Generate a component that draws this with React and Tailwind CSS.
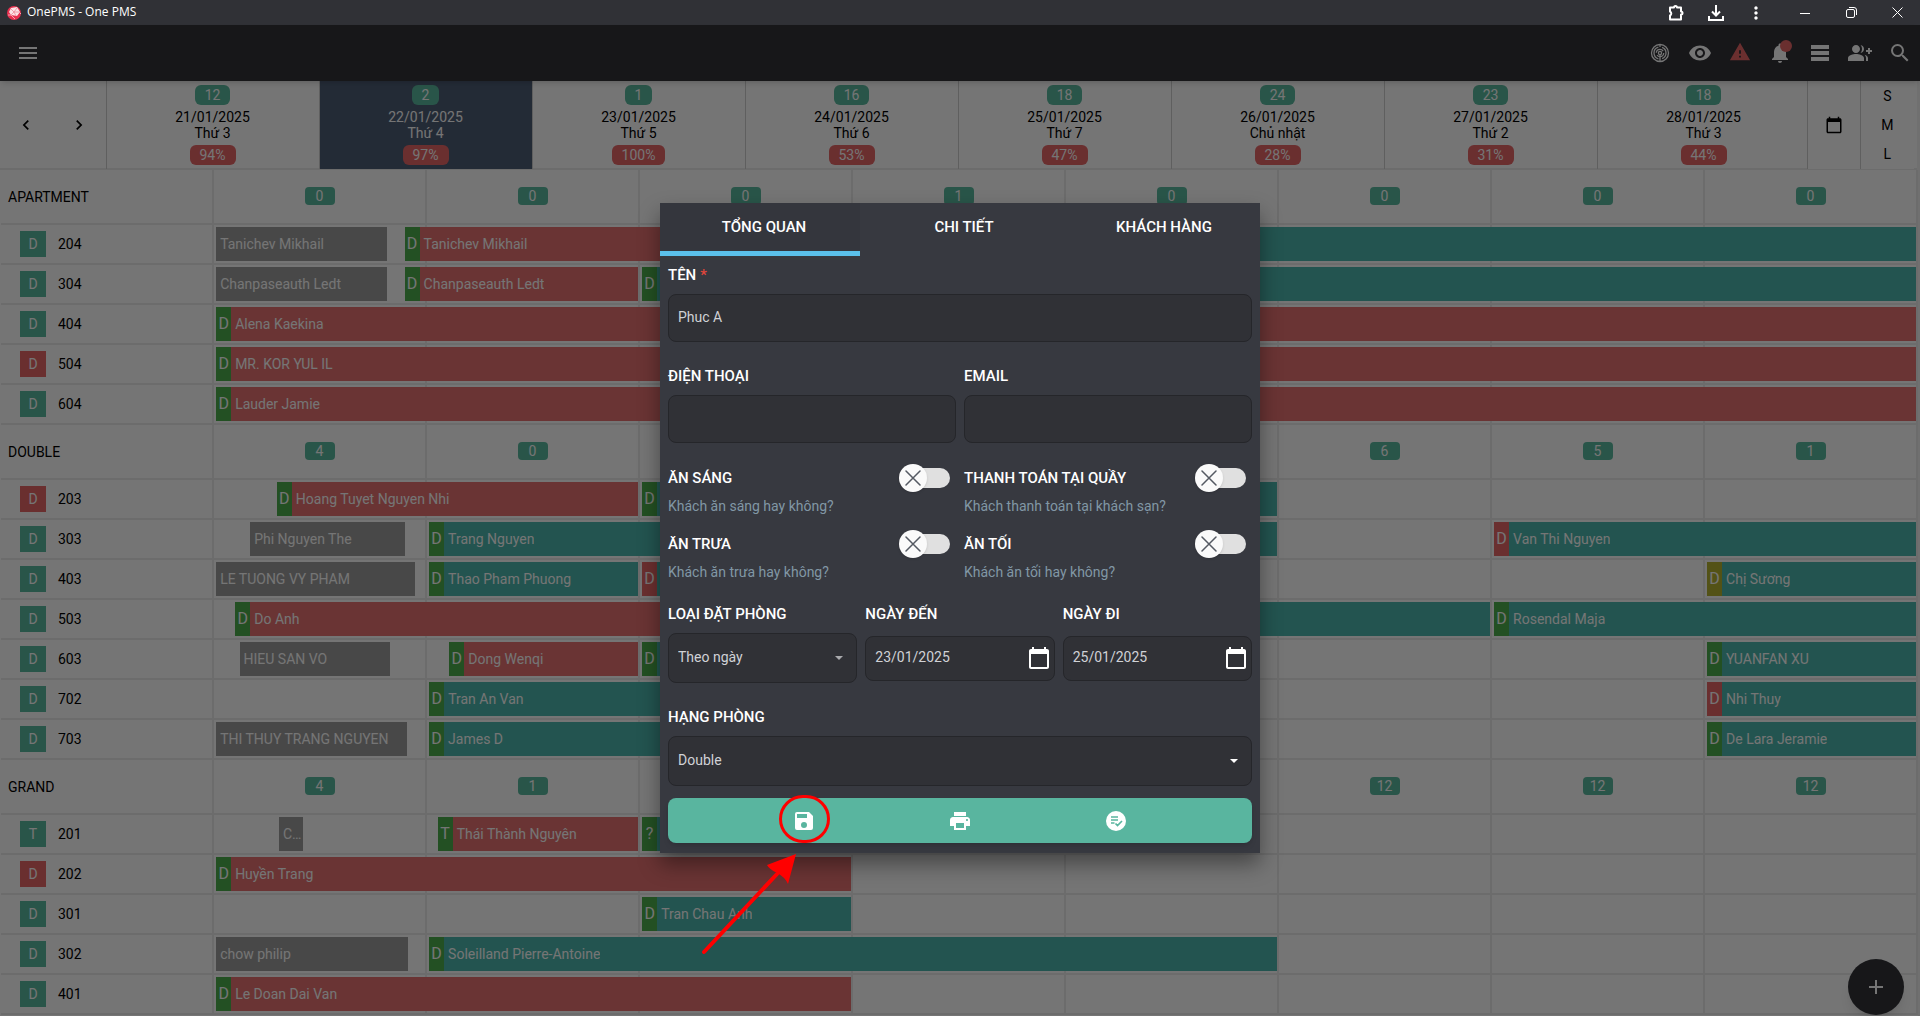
import { Fragment } from 'react';
import {
  MdAdd,
  MdCalendarToday,
  MdChevronLeft,
  MdChevronRight,
  MdGroupAdd,
  MdMenu,
  MdMoreVert,
  MdNotifications,
  MdPrint,
  MdSearch,
  MdVisibility,
  MdWarning,
} from 'react-icons/md';

const days = [
  { free: 12, date: '21/01/2025', name: 'Thứ 3', rate: '94%' },
  { free: 2, date: '22/01/2025', name: 'Thứ 4', rate: '97%', today: true },
  { free: 1, date: '23/01/2025', name: 'Thứ 5', rate: '100%' },
  { free: 16, date: '24/01/2025', name: 'Thứ 6', rate: '53%' },
  { free: 18, date: '25/01/2025', name: 'Thứ 7', rate: '47%' },
  { free: 24, date: '26/01/2025', name: 'Chủ nhật', rate: '28%' },
  { free: 23, date: '27/01/2025', name: 'Thứ 2', rate: '31%' },
  { free: 18, date: '28/01/2025', name: 'Thứ 3', rate: '44%' },
];

// from / to are counted in days from the left edge of the timeline
const groups = [
  {
    name: 'APARTMENT',
    counts: [0, 0, 0, 1, 0, 0, 0, 0],
    rooms: [
      {
        no: '204',
        bars: [
          { from: 0.01, to: 0.81, state: 'out', guest: 'Tanichev Mikhail' },
          { from: 0.895, to: 2.99, state: 'in', tag: 'D', guest: 'Tanichev Mikhail' },
          { from: 3.01, to: 7.99, state: 'booked', tag: 'D' },
        ],
      },
      {
        no: '304',
        bars: [
          { from: 0.01, to: 0.81, state: 'out', guest: 'Chanpaseauth Ledt' },
          { from: 0.895, to: 1.99, state: 'in', tag: 'D', guest: 'Chanpaseauth Ledt' },
          { from: 2.01, to: 7.99, state: 'booked', tag: 'D' },
        ],
      },
      { no: '404', bars: [{ from: 0.01, to: 7.99, state: 'in', tag: 'D', guest: 'Alena Kaekina' }] },
      { no: '504', dirty: true, bars: [{ from: 0.01, to: 7.99, state: 'in', tag: 'D', guest: 'MR. KOR YUL IL' }] },
      { no: '604', bars: [{ from: 0.01, to: 7.99, state: 'in', tag: 'D', guest: 'Lauder Jamie' }] },
    ],
  },
  {
    name: 'DOUBLE',
    counts: [4, 0, 0, 3, 5, 6, 5, 1],
    rooms: [
      {
        no: '203',
        dirty: true,
        bars: [
          { from: 0.295, to: 1.99, state: 'in', tag: 'D', guest: 'Hoang Tuyet Nguyen Nhi' },
          { from: 2.01, to: 4.99, state: 'booked', tag: 'D' },
        ],
      },
      {
        no: '303',
        bars: [
          { from: 0.17, to: 0.895, state: 'out', guest: 'Phi Nguyen The' },
          { from: 1.01, to: 4.99, state: 'booked', tag: 'D', guest: 'Trang Nguyen' },
          { from: 6.01, to: 7.99, state: 'booked', tag: 'D', tagColor: 'red', guest: 'Van Thi Nguyen' },
        ],
      },
      {
        no: '403',
        bars: [
          { from: 0.01, to: 0.945, state: 'out', guest: 'LE TUONG VY PHAM' },
          { from: 1.01, to: 1.99, state: 'booked', tag: 'D', guest: 'Thao Pham Phuong' },
          { from: 2.01, to: 3.99, state: 'booked', tag: 'D', tagColor: 'red' },
          { from: 7.01, to: 7.99, state: 'booked', tag: 'D', tagColor: 'yellow', guest: 'Chị Sương' },
        ],
      },
      {
        no: '503',
        bars: [
          { from: 0.1, to: 3.99, state: 'in', tag: 'D', guest: 'Do Anh' },
          { from: 4.01, to: 5.99, state: 'booked', tag: 'D' },
          { from: 6.01, to: 7.99, state: 'booked', tag: 'D', guest: 'Rosendal Maja' },
        ],
      },
      {
        no: '603',
        bars: [
          { from: 0.12, to: 0.825, state: 'out', guest: 'HIEU SAN VO' },
          { from: 1.105, to: 1.99, state: 'in', tag: 'D', guest: 'Dong Wenqi' },
          { from: 2.01, to: 3.99, state: 'booked', tag: 'D' },
          { from: 7.01, to: 7.99, state: 'booked', tag: 'D', guest: 'YUANFAN XU' },
        ],
      },
      {
        no: '702',
        bars: [
          { from: 1.01, to: 3.99, state: 'booked', tag: 'D', guest: 'Tran An Van' },
          { from: 7.01, to: 7.99, state: 'booked', tag: 'D', tagColor: 'red', guest: 'Nhi Thuy' },
        ],
      },
      {
        no: '703',
        bars: [
          { from: 0.01, to: 0.905, state: 'out', guest: 'THI THUY TRANG NGUYEN' },
          { from: 1.01, to: 3.99, state: 'booked', tag: 'D', guest: 'James D' },
          { from: 7.01, to: 7.99, state: 'booked', tag: 'D', guest: 'De Lara Jeramie' },
        ],
      },
    ],
  },
  {
    name: 'GRAND',
    counts: [4, 1, 2, 9, 10, 12, 12, 12],
    rooms: [
      {
        no: '201',
        tag: 'T',
        bars: [
          { from: 0.305, to: 0.42, state: 'out', guest: 'C…' },
          { from: 1.05, to: 1.99, state: 'in', tag: 'T', guest: 'Thái Thành Nguyên' },
          { from: 2.01, to: 2.99, state: 'booked', tag: '?' },
        ],
      },
      { no: '202', dirty: true, bars: [{ from: 0.01, to: 2.99, state: 'in', tag: 'D', guest: 'Huyền Trang' }] },
      { no: '301', bars: [{ from: 2.01, to: 2.99, state: 'booked', tag: 'D', guest: 'Tran Chau Anh' }] },
      {
        no: '302',
        bars: [
          { from: 0.01, to: 0.91, state: 'out', guest: 'chow philip' },
          { from: 1.01, to: 4.99, state: 'booked', tag: 'D', guest: 'Soleilland Pierre-Antoine' },
        ],
      },
      { no: '401', bars: [{ from: 0.01, to: 2.99, state: 'in', tag: 'D', guest: 'Le Doan Dai Van' }] },
    ],
  },
];

const barColors = { out: 'bg-[#9d9d9d]', in: 'bg-[#e67272]', booked: 'bg-[#4db7ae]' };
const tagColors = { green: 'bg-[#4eae4e]', red: 'bg-[#e86668]', yellow: 'bg-[#b6b431]' };

function TitleBar() {
  return (
    <div className="flex h-[25px] shrink-0 items-center bg-[#303136] text-white">
      <svg viewBox="0 0 16 16" className="ml-1.5 size-4">
        <circle cx="8" cy="8" r="7" fill="#e8304f" />
        <path d="M5 3l6-1 3 5-3 4-6-1-2-3z" fill="#fbe3e6" />
        <path d="M5 4l3 3 5 0M8 7l-3 3M8 7l2 4M8 7l3-4" stroke="#f08a9a" strokeWidth="0.8" fill="none" />
        <path d="M2 10l3 0 4 4M13 7l2 2" stroke="#f7a3b0" strokeWidth="1" fill="none" />
      </svg>
      <span className="ml-[5px] pb-0.5 font-['Open_Sans',sans-serif] text-xs">OnePMS - One PMS</span>
      <div className="ml-auto flex items-center">
        <button aria-label="Extensions" className="flex w-10 justify-center">
          <svg viewBox="0 0 18 18" className="size-[18px]" fill="none" stroke="currentColor" strokeWidth="2">
            <path d="M3 3.500h4a1.500 1.500 0 0 1 3 0h4v4a1.500 1.500 0 0 1 0 3v5H3v-4a2.200 2.200 0 0 0 0-4z" strokeLinejoin="round" />
          </svg>
        </button>
        <button aria-label="Downloads" className="flex w-10 justify-center">
          <svg viewBox="0 0 18 18" className="size-[18px]" fill="none" stroke="currentColor" strokeWidth="2">
            <path d="M9 1v10M5 7.500l4 4 4-4M2 12v4h14v-4" />
          </svg>
        </button>
        <button aria-label="More" className="flex w-10 justify-center">
          <MdMoreVert className="size-5" />
        </button>
        <button aria-label="Minimize" className="ml-1.5 flex w-[46px] justify-center">
          <svg viewBox="0 0 10 10" className="size-2.5" stroke="currentColor">
            <path d="M0 5.500h10" />
          </svg>
        </button>
        <button aria-label="Restore" className="flex w-[46px] justify-center">
          <svg viewBox="0 0 11 11" className="size-[11px]" fill="none" stroke="currentColor">
            <rect x="0.500" y="2.500" width="8" height="8" rx="1.500" />
            <path d="M3 0.500h5a2.500 2.500 0 0 1 2.500 2.500v5" />
          </svg>
        </button>
        <button aria-label="Close" className="flex w-[46px] justify-center">
          <svg viewBox="0 0 11 11" className="size-[11px]" stroke="currentColor">
            <path d="M0.500 0.500l10 10M10.500 0.500l-10 10" />
          </svg>
        </button>
      </div>
    </div>
  );
}

function AppBar() {
  return (
    <header className="relative z-10 flex h-14 shrink-0 items-center bg-[#323338] pl-4 text-white shadow-md">
      <button aria-label="Menu">
        <MdMenu className="size-6" />
      </button>
      <div className="ml-auto flex">
        <button aria-label="Radar" className="flex w-10 justify-center">
          <svg viewBox="0 0 24 24" className="size-6" fill="none" stroke="currentColor" strokeWidth="1.300">
            <circle cx="12" cy="12" r="8.500" />
            <circle cx="12" cy="12" r="6" strokeDasharray="15 3.850" strokeDashoffset="8" />
            <circle cx="12" cy="12" r="3.700" strokeDasharray="9 2.600" />
            <circle cx="12" cy="12" r="1.600" />
            <path d="M12 13v8M12 3v3" />
          </svg>
        </button>
        <button aria-label="View" className="flex w-10 justify-center">
          <MdVisibility className="size-6" />
        </button>
        <button aria-label="Warnings" className="flex w-10 justify-center text-[#e86668]">
          <MdWarning className="size-[22px]" />
        </button>
        <button aria-label="Notifications" className="relative flex w-10 justify-center">
          <MdNotifications className="size-6" />
          <span className="absolute -top-px right-2 size-3 rounded-full bg-[#e86668]" />
        </button>
        <button aria-label="List" className="flex w-10 justify-center">
          <svg viewBox="0 0 24 24" className="size-6" fill="currentColor">
            <path d="M3 4h18v4H3zM3 10h18v4H3zM3 16h18v4H3z" />
          </svg>
        </button>
        <button aria-label="Add guests" className="flex w-10 justify-center">
          <MdGroupAdd className="size-6" />
        </button>
        <button aria-label="Search" className="flex w-10 justify-center">
          <MdSearch className="size-6" />
        </button>
      </div>
    </header>
  );
}

function DayHeader() {
  return (
    <div className="mr-[3px] grid h-[89px] shrink-0 grid-cols-[1fr_repeat(8,2fr)_1fr] border-b-2 border-[#ececec] bg-white">
      <div className="grid grid-cols-2 border-r border-[#d0d0d0]">
        <button aria-label="Previous day" className="flex items-center justify-center">
          <MdChevronLeft className="size-5" />
        </button>
        <button aria-label="Next day" className="flex items-center justify-center">
          <MdChevronRight className="size-5" />
        </button>
      </div>
      {days.map((day) => (
        <div
          key={day.date}
          className={`flex h-[88px] flex-col items-center border-r border-[#d0d0d0] pt-1 leading-4 ${day.today ? 'bg-[#4e5e76] text-white' : ''}`}
        >
          <span className="mb-1 rounded-md bg-[#5bb99f] px-2.5 leading-5 text-white">{day.free}</span>
          <span>{day.date}</span>
          <span>{day.name}</span>
          <span className="mt-1 rounded-md bg-[#e86668] px-2.5 leading-5 text-white">{day.rate}</span>
        </div>
      ))}
      <div className="-ml-1 mr-[3px] grid grid-cols-2 border-l border-[#d0d0d0] bg-white">
        <button aria-label="Pick a date" className="flex items-center justify-center border-r border-[#d0d0d0]">
          <MdCalendarToday className="size-[18px]" />
        </button>
        <div className="flex flex-col justify-around">
          <button>S</button>
          <button>M</button>
          <button>L</button>
        </div>
      </div>
    </div>
  );
}

function Bar({ bar, gap }) {
  return (
    <div
      className={`flex h-[34px] shrink-0 overflow-hidden text-white ${barColors[bar.state]}`}
      style={{ marginLeft: `${gap * 12.5}%`, width: `${(bar.to - bar.from) * 12.5}%` }}
    >
      {bar.tag && (
        <span className={`w-[15px] shrink-0 text-center text-base leading-[34px] ${tagColors[bar.tagColor || 'green']}`}>
          {bar.tag}
        </span>
      )}
      {bar.guest && <span className="truncate pl-1 leading-[34px]">{bar.guest}</span>}
    </div>
  );
}

function RoomRow({ room }) {
  return (
    <div className="grid h-10 grid-cols-9">
      <div className="flex items-center border-r-2 border-b-2 border-[#ececec] pl-[19px]">
        <span className={`w-[26px] text-center leading-[26px] text-white ${room.dirty ? 'bg-[#e86668]' : 'bg-[#5bb99f]'}`}>
          {room.tag || 'D'}
        </span>
        <span className="ml-3">{room.no}</span>
      </div>
      <div className="col-span-8 grid">
        <div className="grid grid-cols-8 [grid-area:1/1]">
          {days.map((day) => (
            <div key={day.date} className="border-r-2 border-b-2 border-[#ececec]" />
          ))}
        </div>
        <div className="flex min-w-0 pt-0.5 [grid-area:1/1]">
          {room.bars.map((bar, i) => (
            <Bar key={bar.from} bar={bar} gap={bar.from - (i ? room.bars[i - 1].to : 0)} />
          ))}
        </div>
      </div>
    </div>
  );
}

function Timeline() {
  return (
    <div className="mr-0.5 grow overflow-hidden bg-white pl-px">
      {groups.map((group) => (
        <Fragment key={group.name}>
          <div className="grid h-[55px] grid-cols-9">
            <div className="flex items-center border-r-2 border-b-2 border-[#ececec] pl-[7px]">{group.name}</div>
            {group.counts.map((count, i) => (
              <div key={i} className="flex items-center justify-center border-r-2 border-b-2 border-[#ececec] pb-0.5">
                <span className="w-[30px] rounded bg-[#5bb99f] text-center leading-[18px] text-white">{count}</span>
              </div>
            ))}
          </div>
          {group.rooms.map((room) => (
            <RoomRow key={room.no} room={room} />
          ))}
        </Fragment>
      ))}
    </div>
  );
}

function Switch({ id, label, hint }) {
  return (
    <div>
      <div className="flex h-7 items-center justify-between pr-1.5">
        <label htmlFor={id} className="pt-px text-[15px] font-medium text-white">
          {label}
        </label>
        <span className="relative flex h-7 w-[51px] items-center">
          <input id={id} type="checkbox" className="ml-2 h-5 grow appearance-none rounded-full bg-[#e0e0e0]" />
          <span className="pointer-events-none absolute left-0 flex size-7 items-center justify-center rounded-full bg-[#fafafa] text-[#555a63] shadow">
            <svg viewBox="0 0 16 16" className="size-4" stroke="currentColor" strokeWidth="1.500" strokeLinecap="round">
              <path d="M1 1l14 14M15 1L1 15" />
            </svg>
          </span>
        </span>
      </div>
      <p className="mt-1 leading-5 text-[#8197a5]">{hint}</p>
    </div>
  );
}

function Field({ id, label, required, children }) {
  return (
    <div>
      <label htmlFor={id} className="mb-[9px] block text-[15px] leading-5 font-medium text-white">
        {label}
        {required && <span className="ml-1 text-[#e0463c]">*</span>}
      </label>
      {children}
    </div>
  );
}

const boxClass = 'w-full rounded-lg border border-[#25262a] bg-[#303136] px-[9px] pb-0.5 text-[#d0d2d6] outline-none';

function Select({ id, value, arrow }) {
  return (
    <div className="relative flex items-center">
      <select id={id} defaultValue={value} className={`${boxClass} h-[50px] appearance-none`}>
        <option>{value}</option>
      </select>
      <svg viewBox="0 0 8 4" className={`pointer-events-none absolute right-3.5 h-1 w-2 ${arrow}`} fill="currentColor">
        <path d="M0 0h8L4 4z" />
      </svg>
    </div>
  );
}

function DateInput({ id, value }) {
  return (
    <div className="relative flex h-[50px] items-center">
      <input id={id} type="text" defaultValue={value} className={`${boxClass} h-[45px]`} />
      <button type="button" aria-label="Open calendar" className="absolute right-1 text-white">
        <MdCalendarToday className="size-6" />
      </button>
    </div>
  );
}

const tabClass = 'h-[53px] border-b-[5px] pt-px pl-2';

function BookingDialog() {
  return (
    <div role="dialog" className="relative w-[600px] bg-[#373940] pb-2.5 shadow-[0_11px_20px_rgba(0,0,0,0.4)]">
      <div className="grid grid-cols-3 text-[15px] font-medium text-white">
        <button className={`${tabClass} border-[#5bc0eb] bg-[#34363d]`}>TỔNG QUAN</button>
        <button className={`${tabClass} border-transparent`}>CHI TIẾT</button>
        <button className={`${tabClass} border-transparent`}>KHÁCH HÀNG</button>
      </div>
      <form className="px-2 pt-[9px]">
        <Field id="name" label="TÊN" required>
          <input id="name" type="text" defaultValue="Phuc A" className={`${boxClass} h-12`} />
        </Field>
        <div className="mt-6 grid grid-cols-2 gap-2">
          <Field id="phone" label="ĐIỆN THOẠI">
            <input id="phone" type="tel" className={`${boxClass} h-12`} />
          </Field>
          <Field id="email" label="EMAIL">
            <input id="email" type="email" className={`${boxClass} h-12`} />
          </Field>
        </div>
        <div className="mt-[21px] grid grid-cols-2 gap-x-2 gap-y-3.5">
          <Switch id="breakfast" label="ĂN SÁNG" hint="Khách ăn sáng hay không?" />
          <Switch id="counter" label="THANH TOÁN TẠI QUẦY" hint="Khách thanh toán tại khách sạn?" />
          <Switch id="lunch" label="ĂN TRƯA" hint="Khách ăn trưa hay không?" />
          <Switch id="dinner" label="ĂN TỐI" hint="Khách ăn tối hay không?" />
        </div>
        <div className="mt-[22px] grid grid-cols-3 gap-2">
          <Field id="type" label="LOẠI ĐẶT PHÒNG">
            <Select id="type" value="Theo ngày" arrow="text-[#a9aaad]" />
          </Field>
          <Field id="arrive" label="NGÀY ĐẾN">
            <DateInput id="arrive" value="23/01/2025" />
          </Field>
          <Field id="leave" label="NGÀY ĐI">
            <DateInput id="leave" value="25/01/2025" />
          </Field>
        </div>
        <div className="mt-6">
          <Field id="class" label="HẠNG PHÒNG">
            <Select id="class" value="Double" arrow="text-white" />
          </Field>
        </div>
        <div className="mt-3 grid h-[45px] grid-cols-3 rounded-lg bg-[#59b59f] px-[58px] text-white shadow-md">
          <button type="button" aria-label="Save" className="flex items-center justify-center">
            <svg viewBox="0 0 24 24" className="size-6" fill="currentColor" fillRule="evenodd">
              <path d="M5 3h12l4 4v12a2 2 0 0 1-2 2H5a2 2 0 0 1-2-2V5a2 2 0 0 1 2-2zM5 5v4h10V5zM12 13a3 3 0 1 0 0 6 3 3 0 0 0 0-6z" />
            </svg>
          </button>
          <button type="button" aria-label="Print" className="flex items-center justify-center">
            <MdPrint className="size-6" />
          </button>
          <button type="button" aria-label="Confirm" className="flex items-center justify-center">
            <svg viewBox="0 0 24 24" className="size-6">
              <circle cx="12" cy="12" r="10" fill="currentColor" />
              <path d="M7 8h7M7 11h7M7 14h3.500M11.500 14.500l2 2 4.500-4.500" fill="none" stroke="#59b59f" strokeWidth="1.700" />
            </svg>
          </button>
        </div>
      </form>
      {/* pointer to the save button */}
      <svg viewBox="0 0 110 160" className="pointer-events-none absolute top-[592px] left-10 h-40 w-[110px]">
        <path d="M4 157L77 79" stroke="#f00" strokeWidth="4" strokeLinecap="round" />
        <path d="M96 59L67 70q2 4 10 8t11 11z" fill="#f00" />
      </svg>
      <span className="pointer-events-none absolute top-[592px] left-[119px] h-12 w-[51px] rounded-full border-[3px] border-[#f00]" />
    </div>
  );
}

export default function App() {
  return (
    <div className="flex h-screen flex-col overflow-hidden bg-white font-[Roboto,sans-serif] text-sm text-black">
      <TitleBar />
      <div className="relative flex min-h-0 grow flex-col">
        <AppBar />
        <main className="flex min-h-0 grow flex-col bg-[#f4f4f4]">
          <DayHeader />
          <Timeline />
        </main>
        <button
          aria-label="Add booking"
          className="absolute right-4 bottom-px flex size-14 items-center justify-center rounded-full bg-[#323338] text-white shadow-lg"
        >
          <MdAdd className="size-6" />
        </button>
        <div className="absolute inset-0 z-20 flex items-start justify-center bg-black/54 pt-[178px]">
          <BookingDialog />
        </div>
      </div>
    </div>
  );
}
